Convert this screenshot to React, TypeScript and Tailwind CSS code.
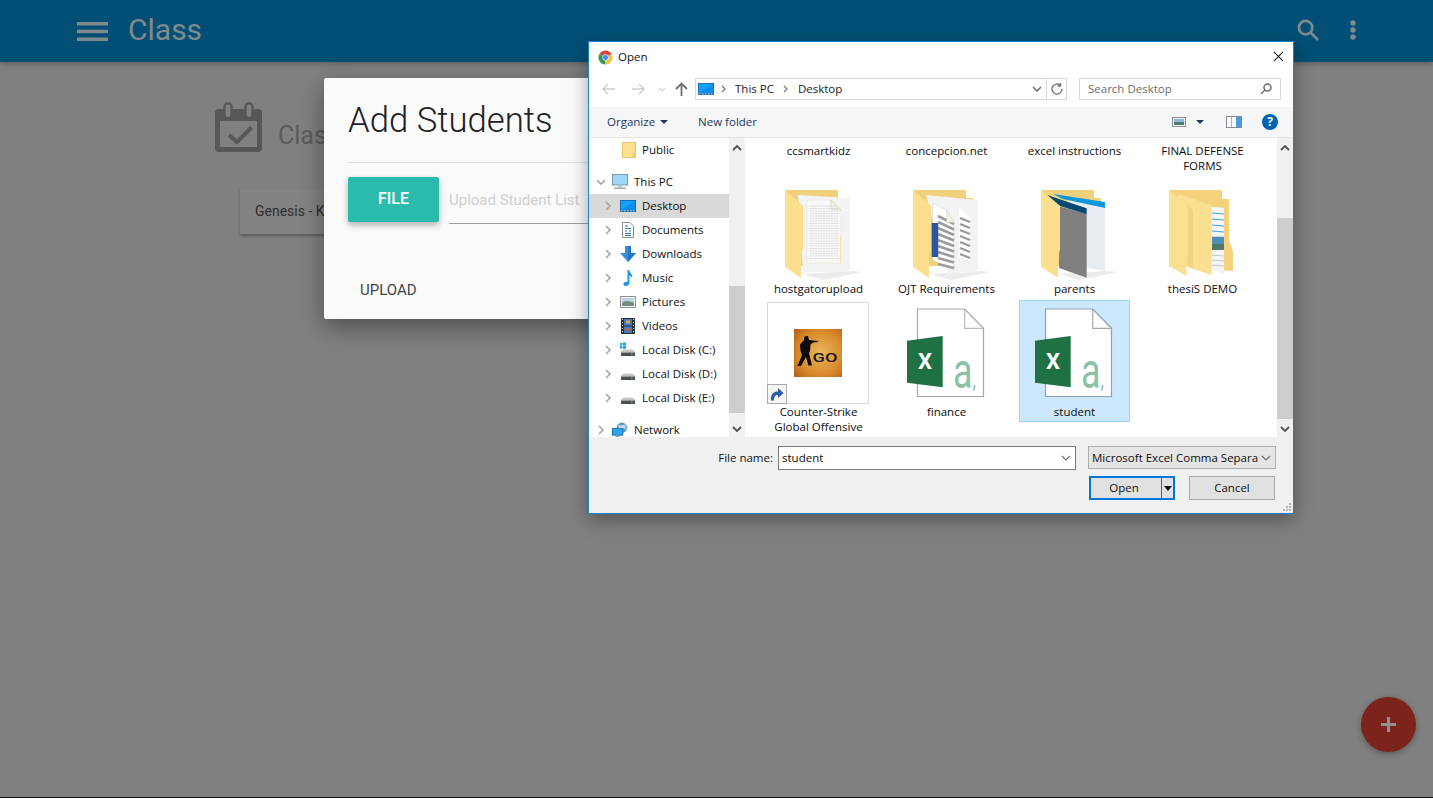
import { ReactNode } from "react";

const SB = "#a6a6a6";

function Chevron({ down, className = "" }: { down?: boolean; className?: string }) {
  return (
    <svg viewBox="0 0 8 10" className={`h-[10px] w-2 shrink-0 ${className}`} fill="none" stroke={SB} strokeWidth="1.6">
      {down ? <path d="M0 3l4 4 4-4" /> : <path d="M2 1l4 4-4 4" />}
    </svg>
  );
}

function Monitor() {
  return (
    <svg viewBox="0 0 16 12" className="h-3 w-4">
      <rect x="0" y="0" width="16" height="12" fill="#14609e" />
      <rect x="0.7" y="0.7" width="14.6" height="9.6" fill="#16a0f5" />
      <path d="M1 10 L15 1 V10 Z" fill="#0b8eeb" />
      <path d="M0.7 10.9H15.300" stroke="#eaf6fd" strokeWidth="0.8" strokeDasharray="2 1" />
    </svg>
  );
}

function ThisPcIcon() {
  return (
    <svg viewBox="0 0 16 16" className="h-4 w-4">
      <rect x="0.5" y="0.5" width="15" height="10.5" fill="#9fd8f6" stroke="#7f98ad" />
      <rect x="6" y="11" width="4" height="2.5" fill="#b9c6d2" />
      <rect x="2" y="13.5" width="12" height="1.5" fill="#9aa9b6" />
    </svg>
  );
}

function PublicIcon() {
  return (
    <svg viewBox="0 0 14 16" className="h-4 w-[14px]">
      <rect x="0.5" y="0.5" width="13" height="15" fill="#fbe08f" stroke="#e3c468" />
      <rect x="10.5" y="11" width="3" height="4.5" fill="#f0cf72" />
    </svg>
  );
}

function DocumentsIcon() {
  return (
    <svg viewBox="0 0 16 16" className="h-4 w-4">
      <path d="M2.5 0.5H10L13.5 4V15.5H2.5Z" fill="#fdfdfd" stroke="#8d8d8d" />
      <path d="M5 4h3M5 6.5h6M5 9h2M9 9h2M5 11.5h6M5 13.5h6" stroke="#2c7fb8" strokeWidth="1" />
    </svg>
  );
}

function DownloadsIcon() {
  return (
    <svg viewBox="0 0 16 16" className="h-4 w-4">
      <path d="M5 0H11V7H16L8 16L0 7H5Z" fill="#3a8fdc" />
      <path d="M8 0H11V7H16L8 16Z" fill="#2276c6" />
    </svg>
  );
}

function MusicIcon() {
  return (
    <svg viewBox="0 0 16 16" className="h-4 w-4">
      <path d="M7.5 0H9.2C9.6 3 13 4 12.2 8.4C11.6 6.6 10.6 5.8 9.4 5.4V13C9.4 15 7.6 16 5.8 16C4.2 16 3.4 15 3.4 14C3.4 12.4 5.4 11.2 7.5 11.8Z" fill="#1c97ea" />
    </svg>
  );
}

function PicturesIcon() {
  return (
    <svg viewBox="0 0 16 12" className="h-3 w-4">
      <rect x="0.5" y="0.5" width="15" height="11" fill="#f4f4f4" stroke="#8f8f8f" />
      <rect x="2" y="2" width="12" height="4" fill="#bcd6e6" />
      <path d="M2 6.5C5 4.5 9 5 14 6.5V10H2Z" fill="#6f8f80" />
    </svg>
  );
}

function VideosIcon() {
  return (
    <svg viewBox="0 0 14 16" className="h-4 w-[14px]">
      <rect width="14" height="16" fill="#303030" />
      <rect x="3" y="1" width="8" height="6.5" fill="#3f79c8" />
      <rect x="3" y="8.5" width="8" height="6.5" fill="#3f79c8" />
      <rect x="5" y="2.5" width="4" height="3" fill="#d8ae3c" />
      <rect x="5" y="10" width="4" height="3" fill="#b7653a" />
      <path d="M1 1.5h1M1 4.5h1M1 7.5h1M1 10.5h1M1 13.5h1M12 1.5h1M12 4.5h1M12 7.5h1M12 10.5h1M12 13.5h1" stroke="#dcdcdc" />
    </svg>
  );
}

function DiskIcon({ windows }: { windows?: boolean }) {
  return (
    <svg viewBox="0 0 16 16" className="h-4 w-4">
      {windows && <path d="M0 1h2.4v2.4H0zM3 .6h3v2.8H3zM0 4h2.4v2.4H0zM3 4h3v2.8H3z" fill="#16a5ee" />}
      <path d="M2 9.5 L3.5 7.5 H12.5 L14 9.5Z" fill="#c9c9c9" />
      <rect x="1" y="9.5" width="14" height="4.5" fill="#4d4d4d" />
      <rect x="1" y="9.5" width="14" height="1" fill="#e6e6e6" />
      <rect x="11" y="11.5" width="1.6" height="1.2" fill="#41e05a" />
    </svg>
  );
}

function NetworkIcon() {
  return (
    <svg viewBox="0 0 17 16" className="h-4 w-[17px]">
      <circle cx="10.5" cy="5.5" r="5.5" fill="#5a9bc4" />
      <path d="M7 2.5C10 4 12 2 14 2.5L15 7C12 6 10 8 7 7Z" fill="#c3d9e6" />
      <rect x="0.5" y="6.5" width="11" height="7" fill="#2ea7ee" stroke="#1b6fa8" />
      <rect x="4" y="14" width="4" height="2" fill="#8fa4b4" />
    </svg>
  );
}

function NavRow({ icon, label, active, top }: { icon: ReactNode; label: string; active?: boolean; top?: boolean }) {
  return (
    <div className={`flex h-6 items-center ${top ? "pl-2" : "pl-[15px]"} ${active ? "bg-[#d9d9d9]" : ""}`}>
      <Chevron />
      <span className={`flex h-4 w-4 items-center justify-center ${top ? "ml-[7px]" : "ml-2"}`}>{icon}</span>
      <span className="ml-[6px] text-[#101010]">{label}</span>
    </div>
  );
}

function ScrollBar({ thumb }: { thumb: string }) {
  return (
    <div className="flex w-4 shrink-0 flex-col items-center bg-[#f0f0f0]">
      <svg viewBox="0 0 10 6" className="mt-[7px] h-[6px] w-[10px] shrink-0" fill="none" stroke="#505050" strokeWidth="1.8">
        <path d="M1 5l4-4 4 4" />
      </svg>
      <div className={`w-4 bg-[#cdcdcd] ${thumb}`} />
      <svg viewBox="0 0 10 6" className="mt-auto mb-[5px] h-[6px] w-[10px] shrink-0" fill="none" stroke="#505050" strokeWidth="1.8">
        <path d="M1 1l4 4 4-4" />
      </svg>
    </div>
  );
}

function Back() {
  return <path d="M22 12H75V20H82V88H22Z" fill="#f0d17c" />;
}

function Flap() {
  return <path d="M22 12L40 28V72L38 76V100L22 89Z" fill="#fcdf8e" />;
}

function Shadow() {
  return <path d="M40 96L87 93L100 94L60 102Z" fill="#ececec" />;
}

function HostgatorFolder() {
  const lines = [];
  for (let y = 28; y < 82; y += 2.5) lines.push(<path key={y} d={`M47 ${y}H75`} stroke="#dddddd" strokeWidth="1" strokeDasharray="2 0.6" />);
  return (
    <svg viewBox="0 0 111 104" className="h-[104px] w-[111px]">
      <Back />
      <Shadow />
      <path d="M35 17L87 20V94L40 94Z" fill="#f3f3f3" />
      <path d="M44 22H68L78 32V85H44Z" fill="#f8f8f8" stroke="#e6e2d2" strokeWidth="0.6" />
      <path d="M68 22V32H78Z" fill="#eeeeee" stroke="#e3d3a4" strokeWidth="0.7" />
      {lines}
      <path d="M77.5 58V85" stroke="#f4e3ad" />
      <Flap />
    </svg>
  );
}

function OjtFolder() {
  const main = [];
  for (let i = 0; i < 9; i++) main.push(<path key={i} d={`M47 ${38 + i * 6}L63 ${46 + i * 5.5}`} stroke="#9a9a9a" strokeWidth="2.6" />);
  const second = [];
  for (let i = 0; i < 7; i++) second.push(<path key={i} d={`M69 ${40 + i * 6}L79 ${44 + i * 6}`} stroke="#9a9a9a" strokeWidth="2.4" />);
  return (
    <svg viewBox="0 0 111 104" className="h-[104px] w-[111px]">
      <Back />
      <Shadow />
      <path d="M35 17L87 22V94L56 96Z" fill="#f3f3f3" />
      <path d="M68 29L79 40V83L68 79Z" fill="#ffffff" />
      {second}
      <path d="M41.7 25.3L55.7 32L63 44.3V92L41.7 82Z" fill="#ffffff" stroke="#c9c9c9" strokeWidth="0.5" />
      {main}
      <rect x="40.7" y="45" width="6.6" height="34" fill="#2a5a9c" />
      <path d="M55.7 32V44.3H63Z" fill="#f1f1f1" stroke="#e3d3a4" strokeWidth="0.6" />
      <Flap />
    </svg>
  );
}

function ParentsFolder() {
  return (
    <svg viewBox="0 0 111 104" className="h-[104px] w-[111px]">
      <Back />
      <Shadow />
      <path d="M48 22L86 29V93L67.7 90Z" fill="#e9edf0" />
      <path d="M34 16L86 24V30L44 21Z" fill="#0a97de" />
      <path d="M41 28.7L67.7 35.3V99.7L40 90Z" fill="#7f7f7f" />
      <path d="M28 17L67.7 30.3V36L41 28Z" fill="#064a73" />
      <path d="M22 12L41 28V72L39 76V99.7L22 89Z" fill="#fcdf8e" />
    </svg>
  );
}

function ThesisFolder() {
  return (
    <svg viewBox="0 0 111 104" className="h-[104px] w-[111px]">
      <path d="M22 12H75V21H82V62L86 73.7V93L70 92V88H22Z" fill="#f3d27b" />
      <path d="M60 28.7L77 29.7V97L60 90Z" fill="#f5f5f5" />
      <path d="M65 35L77 36M65 41L77 42M65 47L77 48M65 53L77 54" stroke="#3fa6e4" strokeWidth="1" />
      <rect x="65" y="58.7" width="12" height="13.3" fill="#4d8fb6" />
      <rect x="65" y="66" width="12" height="6" fill="#4f7c68" />
      <path d="M65 77L77 78M65 82L77 83M65 87L77 88" stroke="#c9c9c9" strokeWidth="1" />
      <path d="M31 16L64.7 27V97L43 90L31 70Z" fill="#fbdf90" />
      <path d="M22 12L41 28V72L39.5 76V98L22 88Z" fill="#fae08f" />
      <path d="M41 28L46 32V90L41 89Z" fill="#f0d27f" />
    </svg>
  );
}

function ExcelFile({ selected }: { selected?: boolean }) {
  const edge = selected ? "#8fa0b2" : "#a8a8a8";
  return (
    <svg viewBox="0 0 111 104" className="h-[104px] w-[111px]">
      <path d="M26.5 9H73.7L92.5 28.3V96.5H26.5Z" fill="#ffffff" stroke={edge} strokeWidth="1.2" />
      <path d="M73.7 9V28.3H92.5" fill="none" stroke={selected ? "#a9a9a9" : "#b9b9b9"} strokeWidth="1.2" />
      <path d="M16 40.7L51.7 36V87.3L16 82.7Z" fill="#1f7144" />
      <text x="34" y="69" textAnchor="middle" fill="#ffffff" fontFamily="Roboto, sans-serif" fontWeight="700" fontSize="22">X</text>
      <text transform="translate(62 88) scale(0.72 1)" fill="#8cc2a3" fontFamily="Roboto, sans-serif" fontSize="50">
        a<tspan fontSize="24">,</tspan>
      </text>
    </svg>
  );
}

function GameShortcut() {
  return (
    <div className="relative -ml-px flex h-[102px] w-[102px] items-center justify-center border border-[#d9d9d9] bg-white">
      <svg viewBox="0 0 48 48" className="h-12 w-12">
        <defs>
          <radialGradient id="cs" cx="0.55" cy="0.5" r="0.7">
            <stop offset="0" stopColor="#eab65e" />
            <stop offset="0.65" stopColor="#d98a2c" />
            <stop offset="1" stopColor="#b9641a" />
          </radialGradient>
        </defs>
        <rect width="48" height="48" fill="url(#cs)" />
        <path d="M10.500 7.500L14 7L15 11L24 12L24 13L19 13.5L16.500 15.500L16 22L15 24L18 36.500H14.500L12 28L7 37H3.500L8 26L6.500 22L6 15.500L10 11Z" fill="#0c0c0c" />
        <text x="18.5" y="33" fill="#1d1815" fontFamily="Roboto, sans-serif" fontWeight="500" fontSize="13" textLength="25" lengthAdjust="spacingAndGlyphs">GO</text>
      </svg>
      <div className="absolute -bottom-px -left-px flex h-5 w-5 items-center justify-center border border-[#a9a9a9] bg-[#f6f6f6]">
        <svg viewBox="0 0 14 14" className="h-[14px] w-[14px]">
          <path d="M1 13.500C0.500 7 3.500 4.500 8 4.500V1L13.500 6L8 11V8C5 8 3.800 10 4 13.500Z" fill="#2a5ea8" />
        </svg>
      </div>
    </div>
  );
}

function FileItem({ label, children, selected, raised }: { label: ReactNode; children: ReactNode; selected?: boolean; raised?: boolean }) {
  return (
    <div className={`flex h-[122px] w-[111px] flex-col items-center ${selected ? "bg-[#cce8ff] outline outline-[#99d1ff] -outline-offset-1" : ""}`}>
      <div className="flex h-[104px] w-[111px] shrink-0 items-start justify-center">{children}</div>
      <div className={`whitespace-nowrap text-center leading-[15px] text-[#0c0c0c] ${raised ? "-mt-px" : ""}`}>{label}</div>
    </div>
  );
}

function OpenDialog() {
  return (
    <div className="absolute left-[588px] top-[41px] flex h-[473px] w-[706px] flex-col border border-[#1883d7] bg-white font-['Open_Sans',sans-serif] text-[11.5px] text-[#101010] shadow-[0_6px_18px_rgba(0,0,0,0.35)]">
      {/* Title bar */}
      <div className="flex h-[30px] shrink-0 items-center pl-[9px] pr-[9px]">
        <svg viewBox="0 0 16 16" className="h-[15px] w-[15px]">
          <path d="M8 8L1.500 4.250A7.500 7.500 0 0 1 14.500 4.250Z" fill="#d9453a" />
          <path d="M8 8L1.500 4.250A7.500 7.500 0 0 0 8 15.500Z" fill="#2f9e53" />
          <path d="M8 8L14.500 4.250A7.500 7.500 0 0 1 8 15.500Z" fill="#f6c443" />
          <circle cx="8" cy="8" r="3.200" fill="#4a8ce8" stroke="#ffffff" strokeWidth="0.7" />
        </svg>
        <span className="ml-[5px] -mt-[1px] text-[#111]">Open</span>
        <svg viewBox="0 0 12 12" className="ml-auto -mt-[2px] h-[11px] w-[11px]" stroke="#111" strokeWidth="1.1">
          <path d="M1 1l10 10M11 1L1 11" />
        </svg>
      </div>

      {/* Navigation bar */}
      <div className="flex h-[35px] shrink-0 items-start pl-[13px] pr-3 pt-[6px]">
        <div className="flex h-[22px] items-center">
          <svg viewBox="0 0 13 12" className="h-3 w-[13px]" fill="none" stroke="#cfcfcf" strokeWidth="1.5"><path d="M13 6H1.500M6 1L1 6l5 5" /></svg>
          <svg viewBox="0 0 13 12" className="ml-[17px] h-3 w-[13px]" fill="none" stroke="#cfcfcf" strokeWidth="1.5"><path d="M0 6h11.500M7 1l5 5-5 5" /></svg>
          <svg viewBox="0 0 8 5" className="ml-[13px] h-[5px] w-2" fill="none" stroke="#d4d4d4" strokeWidth="1.2"><path d="M1 1l3 3 3-3" /></svg>
          <svg viewBox="0 0 13 14" className="ml-[9px] h-[14px] w-[13px]" fill="none" stroke="#6f6f6f" strokeWidth="1.8"><path d="M6.500 14V2M1 7l5.500-5.500L12 7" /></svg>
        </div>
        <div className="ml-[7px] flex h-[22px] w-[372px] items-center border border-[#d9d9d9] pl-[2px]">
          <Monitor />
          <svg viewBox="0 0 6 8" className="ml-[7px] h-2 w-[6px]" fill="none" stroke="#7d7d7d" strokeWidth="1.4"><path d="M1 1l3 3-3 3" /></svg>
          <span className="-mt-px ml-2 text-[#222]">This PC</span>
          <svg viewBox="0 0 6 8" className="ml-[9px] h-2 w-[6px]" fill="none" stroke="#7d7d7d" strokeWidth="1.4"><path d="M1 1l3 3-3 3" /></svg>
          <span className="-mt-px ml-[9px] text-[#222]">Desktop</span>
          <svg viewBox="0 0 10 6" className="ml-auto mr-[4px] h-[6px] w-[10px]" fill="none" stroke="#6d6d6d" strokeWidth="1.6"><path d="M1 1l4 4 4-4" /></svg>
          <div className="flex h-full w-5 items-center justify-center border-l border-[#d9d9d9]">
            <svg viewBox="0 0 12 12" className="h-3 w-3" fill="none" stroke="#777" strokeWidth="1.4"><path d="M9.500 2.500A5 5 0 1 0 11 6M9.500 0v3H6.500" /></svg>
          </div>
        </div>
        <div className="ml-3 flex h-[22px] w-[202px] items-center border border-[#d9d9d9] pl-2 pr-2 text-[#6d6d6d]">
          <span>Search Desktop</span>
          <svg viewBox="0 0 12 12" className="ml-auto h-3 w-3" fill="none" stroke="#6d6d6d" strokeWidth="1.5"><circle cx="7.500" cy="4.500" r="3.500" /><path d="M5 7l-4 4" /></svg>
        </div>
      </div>

      {/* Toolbar */}
      <div className="flex h-[31px] shrink-0 items-center border-b border-[#e5e5e5] bg-[#f5f6f7] pl-[18px] pr-[15px] text-[#1e395b]">
        <span>Organize</span>
        <svg viewBox="0 0 8 4" className="ml-[5px] h-1 w-2" fill="#1e395b"><path d="M0 0h8L4 4z" /></svg>
        <span className="ml-[30px]">New folder</span>
        <svg viewBox="0 0 14 10" className="ml-auto h-[10px] w-[14px]">
          <rect x="0.500" y="0.500" width="13" height="9" fill="#f4f4f4" stroke="#8f8f8f" />
          <rect x="2" y="2" width="10" height="3" fill="#8dbad6" />
          <rect x="2" y="5" width="10" height="3" fill="#4f7c68" />
        </svg>
        <svg viewBox="0 0 8 4" className="ml-[10px] h-1 w-2" fill="#1e395b"><path d="M0 0h8L4 4z" /></svg>
        <svg viewBox="0 0 16 12" className="ml-[22px] h-3 w-4">
          <rect x="0.500" y="0.500" width="15" height="11" fill="#ffffff" stroke="#7f8b96" />
          <rect x="10" y="1" width="5" height="10" fill="#4a9be0" />
          <rect x="5" y="1" width="1" height="10" fill="#a9b4bd" />
        </svg>
        <span className="ml-[20px] flex h-4 w-4 items-center justify-center rounded-full bg-[#0063b1] text-[12px] font-bold leading-none text-white">?</span>
      </div>

      {/* Tree and file list */}
      <div className="flex h-[299px] shrink-0 overflow-hidden">
        <div className="w-[140px] shrink-0 overflow-hidden">
          <div className="flex h-6 items-center pl-[33px]">
            <PublicIcon />
            <span className="ml-[6px]">Public</span>
          </div>
          <div className="mt-2 flex h-6 items-center pl-2">
            <Chevron down />
            <span className="ml-[7px] flex h-4 w-4 items-center justify-center"><ThisPcIcon /></span>
            <span className="ml-[6px]">This PC</span>
          </div>
          <NavRow icon={<Monitor />} label="Desktop" active />
          <NavRow icon={<DocumentsIcon />} label="Documents" />
          <NavRow icon={<DownloadsIcon />} label="Downloads" />
          <NavRow icon={<MusicIcon />} label="Music" />
          <NavRow icon={<PicturesIcon />} label="Pictures" />
          <NavRow icon={<VideosIcon />} label="Videos" />
          <NavRow icon={<DiskIcon windows />} label="Local Disk (C:)" />
          <NavRow icon={<DiskIcon />} label="Local Disk (D:)" />
          <NavRow icon={<DiskIcon />} label="Local Disk (E:)" />
          <div className="mt-2">
            <NavRow icon={<NetworkIcon />} label="Network" top />
          </div>
        </div>
        <ScrollBar thumb="mt-[135px] h-[127px]" />
        <div className="ml-px min-w-0 flex-1 overflow-hidden pl-[17px]">
          <div className="grid grid-cols-[111px_111px_111px_111px] gap-x-[17px]">
            <div className="col-span-4 grid h-10 grid-cols-[111px_111px_111px_111px] gap-x-[17px] pt-[5px] text-center leading-[15px] text-[#0c0c0c]">
              <span>ccsmartkidz</span>
              <span>concepcion.net</span>
              <span>excel instructions</span>
              <span>
                FINAL DEFENSE
                <br />
                FORMS
              </span>
            </div>
            <FileItem label="hostgatorupload" raised><HostgatorFolder /></FileItem>
            <FileItem label="OJT Requirements" raised><OjtFolder /></FileItem>
            <FileItem label="parents" raised><ParentsFolder /></FileItem>
            <FileItem label="thesiS DEMO" raised><ThesisFolder /></FileItem>
            <FileItem
              label={
                <>
                  Counter-Strike
                  <br />
                  Global Offensive
                </>
              }
            >
              <div className="pt-[2px]"><GameShortcut /></div>
            </FileItem>
            <FileItem label="finance"><ExcelFile /></FileItem>
            <FileItem label="student" selected><ExcelFile selected /></FileItem>
          </div>
        </div>
        <ScrollBar thumb="mt-[67px] h-[201px]" />
      </div>

      {/* File name and buttons */}
      <div className="relative flex min-h-0 flex-1 flex-col bg-[#f0f0f0] pr-[17px] pt-[9px]">
        <div className="flex h-6 items-center justify-end">
          <span className="mr-[5px]">File name:</span>
          <div className="flex h-6 w-[298px] items-center justify-between border border-[#7a7a7a] bg-white pl-[3px] pr-[4px]">
            <span>student</span>
            <svg viewBox="0 0 10 6" className="h-[6px] w-[10px]" fill="none" stroke="#6d6d6d" strokeWidth="1.1"><path d="M1 1l4 4 4-4" /></svg>
          </div>
          <div className="ml-3 flex h-[23px] w-[188px] items-center justify-between self-start border border-[#adadad] bg-[#e5e5e5] pl-[3px] pr-[4px]">
            <span className="whitespace-nowrap">Microsoft Excel Comma Separa</span>
            <svg viewBox="0 0 10 6" className="h-[6px] w-[10px]" fill="none" stroke="#6d6d6d" strokeWidth="1.1"><path d="M1 1l4 4 4-4" /></svg>
          </div>
        </div>
        <div className="mt-[6px] flex justify-end pr-px">
          <div className="flex h-6 w-[86px] items-center border-2 border-[#0078d7] bg-[#e1e1e1]">
            <span className="flex-1 pr-1 text-center">Open</span>
            <span className="flex h-full w-[12px] items-center justify-center border-l border-[#5f5f5f]">
              <svg viewBox="0 0 8 5" className="h-[5px] w-2" fill="#111"><path d="M0 0h8L4 5z" /></svg>
            </span>
          </div>
          <div className="ml-[14px] flex h-6 w-[86px] items-center justify-center border border-[#adadad] bg-[#e1e1e1]">Cancel</div>
        </div>
        <svg viewBox="0 0 10 10" className="absolute bottom-[1px] right-[1px] h-[10px] w-[10px]" fill="#b5b5b5">
          <rect x="7" y="1" width="2" height="2" />
          <rect x="4" y="4" width="2" height="2" />
          <rect x="7" y="4" width="2" height="2" />
          <rect x="1" y="7" width="2" height="2" />
          <rect x="4" y="7" width="2" height="2" />
          <rect x="7" y="7" width="2" height="2" />
        </svg>
      </div>
    </div>
  );
}

function AddStudentsModal() {
  return (
    <div className="absolute left-[324px] top-[78px] h-[241px] w-[400px] rounded-[2px] bg-[#fafafa] px-6 shadow-[0_8px_24px_rgba(0,0,0,0.4)]">
      <h1 className="flex h-[85px] items-center border-b border-[#e0e0e0] text-[34.7px] font-light text-[#212121]">Add Students</h1>
      <div className="mt-[14px] flex items-start">
        <button className="h-[45px] w-[91px] rounded-[2px] bg-[#2bbbad] pb-[2px] text-[16px] font-medium text-white shadow-[0_3px_6px_rgba(0,0,0,0.3)]">FILE</button>
        <div className="ml-[10px] h-[47px] flex-1 border-b border-[#9e9e9e] pt-[14px] text-[15px] leading-[18px] text-[#cfcfcf]">Upload Student List</div>
      </div>
      <button className="ml-3 mt-[56px] text-[15px] leading-[20px] text-[#444]">UPLOAD</button>
    </div>
  );
}

export default function App() {
  return (
    <div className="relative h-[798px] w-full overflow-hidden bg-[#808080] font-['Roboto',sans-serif]">
      <header className="flex h-[62px] items-center bg-[#024f75] pl-[77px] pr-[77px] shadow-[0_2px_5px_rgba(0,0,0,0.25)]">
        <svg viewBox="0 0 31 19" className="h-[19px] w-[31px]" fill="#80898e">
          <rect width="31" height="3.500" />
          <rect y="7.700" width="31" height="3.500" />
          <rect y="15.500" width="31" height="3.500" />
        </svg>
        <span className="-mt-[3px] ml-5 text-[30px] text-[#80898e]">Class</span>
        <svg viewBox="0 0 23 23" className="-mt-[3px] ml-auto h-[22px] w-[22px]" fill="none" stroke="#80898e" strokeWidth="2.800">
          <circle cx="9" cy="9" r="7" />
          <path d="M14 14l8 8" />
        </svg>
        <svg viewBox="0 0 6 20" className="-mt-[2px] ml-[31px] h-5 w-[6px]" fill="#80898e">
          <circle cx="3" cy="3" r="2.700" />
          <circle cx="3" cy="10" r="2.700" />
          <circle cx="3" cy="17" r="2.700" />
        </svg>
      </header>

      <main className="pl-[215px] pt-10">
        <div className="flex items-start">
          <svg viewBox="0 0 47 50" className="h-[50px] w-[47px]">
            <rect x="0" y="7" width="47" height="43" rx="4" fill="#575757" />
            <rect x="5" y="19" width="37" height="26" fill="#808080" />
            <rect x="9.500" y="1.200" width="7" height="15" rx="3.500" fill="#808080" stroke="#575757" strokeWidth="2.400" />
            <rect x="30.500" y="1.200" width="7" height="15" rx="3.500" fill="#808080" stroke="#575757" strokeWidth="2.400" />
            <path d="M14 33l8 7L36.500 25.500" fill="none" stroke="#575757" strokeWidth="4" />
          </svg>
          <span className="ml-4 mt-[19px] text-[25px] leading-[30px] text-[#5c5c5c]">Class</span>
        </div>
        <div className="ml-[25px] mt-[37px] flex h-[45px] w-[200px] items-center bg-[#838383] pl-[15px] text-[14px] text-[#2e2e2e] shadow-[0_2px_3px_rgba(0,0,0,0.3)]">Genesis - K</div>
      </main>

      <AddStudentsModal />
      <OpenDialog />

      <button className="absolute left-[1361px] top-[697px] flex h-[55px] w-[55px] items-center justify-center rounded-full bg-[#7c241c] shadow-[0_2px_6px_rgba(0,0,0,0.3)]">
        <svg viewBox="0 0 15 15" className="h-[15px] w-[15px]" fill="#8f8f8f">
          <rect x="6" width="3" height="15" />
          <rect y="6" width="15" height="3" />
        </svg>
      </button>
      <div className="absolute inset-x-0 bottom-0 h-px bg-[#111]" />
    </div>
  );
}
